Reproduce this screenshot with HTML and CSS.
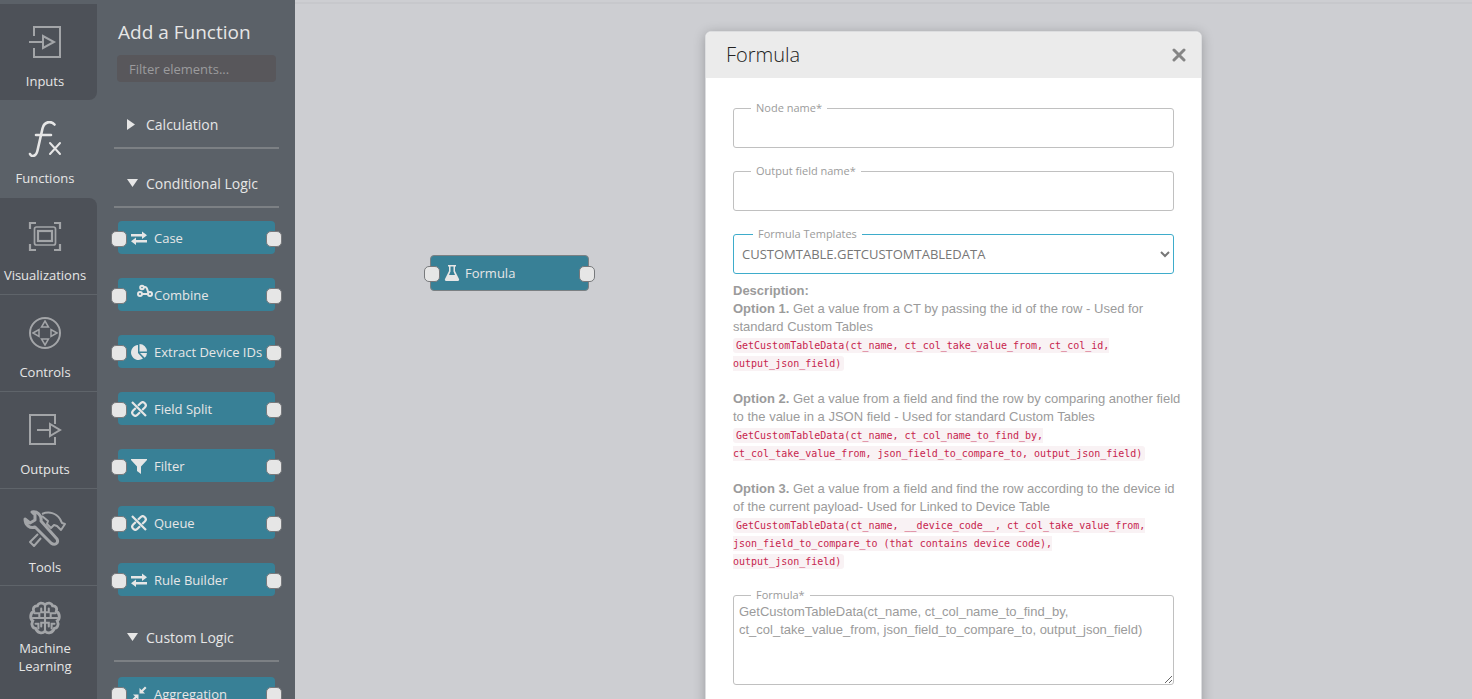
FILE: index.html
```html
<!DOCTYPE html>
<html lang="en">
<head>
<meta charset="utf-8">
<title>Formula</title>
<link rel="stylesheet" href="styles.css">
</head>
<body>
<svg class="sprite" aria-hidden="true">
  <symbol id="swap" viewBox="0 0 16 14"><path fill="currentColor" d="M0 3h11V.5L16 4.200 11 8V5.500H0zM16 9v2.500H5V14L0 10.200 5 6.500V9z"/></symbol>
  <symbol id="unlink" viewBox="0 0 16 16"><g fill="none" stroke="currentColor" stroke-width="2.200"><path transform="rotate(-45 8 8)" d="M6.500 5H2.800a3 3 0 0 0 0 6H6.500M9.500 5h3.700a3 3 0 0 1 0 6H9.500"/><path d="M1 1l14 14"/></g></symbol>
</svg>
<div class="app">
  <nav class="rail">
    <button class="rail-item rail-first"><svg class="rail-icon" viewBox="0 0 34 34"><g fill="none" stroke="currentColor" stroke-width="2"><path d="M6 11V2h26v30H6v-9M1 17h13M15 11v12l11-6z"/></g></svg><span>Inputs</span></button>
    <button class="rail-item rail-active"><svg class="rail-icon" viewBox="0 0 34 36"><g fill="none" stroke="currentColor" stroke-linecap="round"><path stroke-width="2.600" d="M2 33c1.500 3 6 3 7.500-3.500l5-22C16 .5 23-.5 26.500 3.500M8 14h15"/><path stroke-width="2" d="M22 22l10 11M32 22 22 33"/></g></svg><span>Functions</span></button>
    <button class="rail-item rail-next"><svg class="rail-icon" viewBox="0 0 34 34"><g fill="none" stroke="currentColor" stroke-width="2.200"><path d="M2 10V4h6M26 4h6v6M32 25v6h-6M8 31H2v-6"/><rect x="6.500" y="8" width="21" height="18" rx="2" stroke-width="1.700"/><rect x="10" y="12" width="14" height="10"/></g></svg><span>Visualizations</span></button>
    <button class="rail-item"><svg class="rail-icon" viewBox="0 0 34 34"><g fill="none" stroke="currentColor" stroke-width="2"><circle cx="17" cy="17" r="15"/><path stroke-width="1.500" d="m17 5 3.500 6h-7zM17 29l3.500-6h-7zM5 17l6-3.500v7zM29 17l-6-3.500v7z"/></g></svg><span>Controls</span></button>
    <button class="rail-item"><svg class="rail-icon" viewBox="0 0 34 34"><g fill="none" stroke="currentColor" stroke-width="2"><path d="M27 11V2H2v29h25v-7M9 17h13M22 11v12l10-6z"/></g></svg><span>Outputs</span></button>
    <button class="rail-item"><svg class="rail-icon rail-icon-wide" viewBox="0 0 44 38"><g fill="none" stroke="currentColor" stroke-width="2" stroke-linejoin="round"><path d="M19 4c7-3 14-1 18 5l2 4 3 1-4 6-4-4-3-1-3 3-4-4 1-3-6-5M15 24l-8 8 4 4 7-8"/><path stroke-width="3" d="m2 9 5 4 5-3V5L9 2c5-1 10 3 9 9l16 18c2 4-2 7-6 4L12 17c-5 2-10-2-10-8z"/></g></svg><span>Tools</span></button>
    <button class="rail-item rail-last"><svg class="rail-icon" viewBox="0 0 34 36"><g fill="none" stroke="currentColor" stroke-width="2.200" stroke-linecap="round"><path stroke-width="3" d="M17 4c-3-3-7-2-8 1-4 0-5 3-4 6-4 2-4 8-1 10-2 4 0 8 3 8 2 5 7 6 10 3 3 3 8 2 10-3 3 0 5-4 3-8 3-2 3-8-1-10 1-3 0-6-4-6-1-3-5-4-8-1z"/><path d="M17 4v28M13 8v4h4M21 8v4h-4M6 13h5v5H4M28 13h-5v5h7M12 18h10M13 27v-4h8v4M7 24h3v5M27 24h-3v5"/></g></svg><span>Machine<br>Learning</span></button>
  </nav>
  <aside class="panel">
    <h2 class="panel-title">Add a Function</h2>
    <input class="filter" type="text" aria-label="Filter elements" placeholder="Filter elements...">
    <button class="group group-first"><svg class="caret" viewBox="0 0 12 12"><path fill="currentColor" d="M1 1v11l8-5.500z"/></svg>Calculation</button>
    <button class="group"><svg class="caret" viewBox="0 0 12 12"><path fill="currentColor" d="M1 2h11l-5.500 8z"/></svg>Conditional Logic</button>
    <div class="nodes">
      <div class="node"><svg class="node-icon"><use href="#swap"/></svg>Case</div>
      <div class="node node-combine"><svg class="node-icon" viewBox="0 0 16 16"><g fill="none" stroke="currentColor" stroke-width="2"><circle cx="5" cy="3.500" r="1.800"/><circle cx="3" cy="10" r="2"/><circle cx="13" cy="10" r="2"/><path d="M5 10h6M6 3h2c3 0 2 5 4 6"/></g></svg>Combine</div>
      <div class="node"><svg class="node-icon" viewBox="0 0 16 16"><path fill="currentColor" d="M7 1v8l5 5.500A7.500 7.500 0 1 1 7 1zM8.500 0A7.500 7.500 0 0 1 16 7.500H8.500zM9 9h7a7 7 0 0 1-2.300 4.700z"/></svg>Extract Device IDs</div>
      <div class="node"><svg class="node-icon"><use href="#unlink"/></svg>Field Split</div>
      <div class="node"><svg class="node-icon" viewBox="0 0 16 16"><path fill="currentColor" d="M0 1h16v1l-6 6.500V16l-4-3V8.500L0 2z"/></svg>Filter</div>
      <div class="node"><svg class="node-icon"><use href="#unlink"/></svg>Queue</div>
      <div class="node"><svg class="node-icon"><use href="#swap"/></svg>Rule Builder</div>
    </div>
    <button class="group"><svg class="caret" viewBox="0 0 12 12"><path fill="currentColor" d="M1 2h11l-5.500 8z"/></svg>Custom Logic</button>
    <div class="nodes nodes-custom">
      <div class="node"><svg class="node-icon" viewBox="0 0 16 16"><g fill="currentColor"><path d="M8.500 7.500V2l2 2L14 .5 15.500 2 12 5.500l2 2zM7.500 8.500V14l-2-2L2 15.500.5 14 4 10.500l-2-2z"/></g></svg>Aggregation</div>
    </div>
  </aside>
  <main class="canvas">
    <div class="node canvas-node"><svg class="node-icon" viewBox="0 0 16 16"><path fill="currentColor" fill-rule="evenodd" d="M4 0h8v1.500h-1V6l4 8c.5 1-.2 2-1.200 2H2.200C1.200 16 .5 15 1 14l4-8V1.500H4zM6.500 1.500v5L5 10h6L9.500 6.500v-5z"/></svg>Formula</div>
    <section class="dialog" role="dialog" aria-labelledby="dialog-title">
      <header class="dialog-head">
        <h1 class="dialog-title" id="dialog-title">Formula</h1>
        <button class="close" aria-label="Close"><svg class="close-icon" viewBox="0 0 14 14"><path d="m2 2 10 10M12 2 2 12" fill="none" stroke="currentColor" stroke-width="3" stroke-linecap="round"/></svg></button>
      </header>
      <form class="dialog-body">
        <div class="field"><label class="label" for="node-name">Node name*</label><input class="control" id="node-name" type="text"></div>
        <div class="field"><label class="label" for="output-name">Output field name*</label><input class="control" id="output-name" type="text"></div>
        <div class="field"><label class="label label-select" for="template">Formula Templates</label><select class="control control-select" id="template"><option>CUSTOMTABLE.GETCUSTOMTABLEDATA</option></select></div>
        <div class="description">
          <p class="option"><b>Description:</b><br><b>Option 1.</b> Get a value from a CT by passing the id of the row - Used for<br>standard Custom Tables<br><code class="code">GetCustomTableData(ct_name, ct_col_take_value_from, ct_col_id,<br>output_json_field)</code></p>
          <p class="option"><b>Option 2.</b> Get a value from a field and find the row by comparing another field<br>to the value in a JSON field - Used for standard Custom Tables<br><code class="code">GetCustomTableData(ct_name, ct_col_name_to_find_by,<br>ct_col_take_value_from, json_field_to_compare_to, output_json_field)</code></p>
          <p class="option"><b>Option 3.</b> Get a value from a field and find the row according to the device id<br>of the current payload- Used for Linked to Device Table<br><code class="code">GetCustomTableData(ct_name, __device_code__, ct_col_take_value_from,<br>json_field_to_compare_to (that contains device code),<br>output_json_field)</code></p>
        </div>
        <div class="field"><label class="label" for="formula">Formula*</label><textarea class="control control-area" id="formula">GetCustomTableData(ct_name, ct_col_name_to_find_by, ct_col_take_value_from, json_field_to_compare_to, output_json_field)</textarea></div>
      </form>
    </section>
  </main>
</div>
</body>
</html>
```

FILE: styles.css
```css
* { box-sizing: border-box; }
body { margin: 0; font-family: "Open Sans", sans-serif; font-size: 13px; color: #e6e6e6; }
button, input, select, textarea { font: inherit; color: inherit; }
button { background: none; border: 0; padding: 0; cursor: pointer; }
.sprite { position: absolute; width: 0; height: 0; }
.app { display: flex; height: 100vh; overflow: hidden; background: #5b6168; }

.rail { flex: 0 0 97px; padding-top: 4px; display: flex; flex-direction: column; }
.rail-item { flex: none; height: 97px; padding: 21px 7px 0 0; display: flex; flex-direction: column; align-items: center; gap: 13px; background: #4d5158; border-bottom: 1px solid #5f646a; line-height: 18px; }
.rail-icon { width: 34px; height: 34px; flex: none; color: #a3a5a8; }
.rail-icon-wide { width: 44px; height: 38px; margin-bottom: -3px; }
.rail-first { height: 96px; border: 0; border-radius: 0 0 8px 0; }
.rail-active { height: 98px; background: none; border: 0; }
.rail-active .rail-icon { color: #e6e6e6; height: 36px; margin-bottom: -1px; }
.rail-next { border-radius: 0 8px 0 0; }
.rail-last { height: 120px; padding-top: 15px; gap: 4px; border: 0; }

.panel { flex: 0 0 198px; padding: 18px 16px 0 17px; display: flex; flex-direction: column; overflow: hidden; }
.panel-title { margin: 0 4px; font-size: 19px; line-height: 28px; font-weight: 400; }
.filter { flex: none; height: 27px; width: auto; margin: 9px 3px 0; padding: 0 12px; background: #58575b; border: 0; border-radius: 4px; }
.filter::placeholder { color: #9b9b9d; opacity: 1; }
.group { flex: none; height: 59px; padding: 11px 0 0 12px; display: flex; align-items: center; gap: 8px; font-size: 14px; text-align: left; border-bottom: 2px solid #7c8084; }
.group-first { margin-top: 8px; }
.caret { width: 12px; height: 12px; }
.nodes { padding: 13px 4px 7px; display: flex; flex-direction: column; gap: 24px; }
.nodes-custom { padding-top: 15px; }
.node { position: relative; flex: none; height: 33px; padding: 0 13px; display: flex; align-items: center; gap: 7px; background: #388096; border-radius: 4px; line-height: 18px; white-space: nowrap; }
.node-icon { width: 16px; height: 16px; flex: none; }
.node-combine { padding-left: 19px; gap: 1px; }
.node-combine .node-icon { margin-bottom: 6px; }
.node::before, .node::after { content: ""; position: absolute; top: 10px; width: 14px; height: 14px; background: #e6e6e6; border: 1px solid #77797c; border-radius: 5px; }
.node::before { left: -7px; }
.node::after { right: -7px; }

.canvas { position: relative; flex: 1; background: #cdced2; border-top: 2px solid #cdced2; box-shadow: inset 0 2px #c7c8cc; }
.canvas-node { position: absolute; left: 135px; top: 253px; width: 159px; height: 36px; gap: 5px; border: 1px solid #7b8083; }
.dialog { position: absolute; right: 270px; top: 29px; width: 497px; background: #fff; border: 1px solid #dcdddf; border-radius: 6px 6px 0 0; box-shadow: 0 2px 12px rgba(0, 0, 0, .25); color: #9b9b9b; }
.dialog-head { display: flex; justify-content: space-between; align-items: center; height: 46px; padding: 0 15px 0 20px; background: #ebebeb; border-radius: 5px 5px 0 0; }
.dialog-title { margin: 0; font-size: 20px; line-height: 28px; font-weight: 300; color: #222; }
.close { display: flex; color: #858585; }
.close-icon { width: 14px; height: 14px; }
.dialog-body { padding: 30px 27px 40px; }
.field { position: relative; margin-bottom: 23px; }
.label { position: absolute; left: 18px; top: -8px; padding: 0 5px; background: #fff; font-size: 11px; line-height: 16px; }
.label-select { left: 20px; }
.control { display: block; width: 100%; height: 40px; padding: 0 5px; border: 1px solid #c0c0c0; border-radius: 3px; background: #fff; color: #777; outline: 0; }
.control-select { padding: 0 4px; border-color: #3eaccb; }
.control-area { height: 90px; padding: 7px 5px; font-family: "Liberation Sans", Arial, sans-serif; line-height: 18px; color: #9b9b9b; resize: vertical; }
.description { margin: -15px 0 25px; font-family: "Liberation Sans", Arial, sans-serif; line-height: 18px; white-space: nowrap; }
.option { margin: 0; }
.option + .option { margin-top: 18px; }
.code { padding: 2px 3px; background: #f9f2f4; border-radius: 3px; font-family: "DejaVu Sans Mono", monospace; font-size: 10px; line-height: 14px; color: #c7254e; }
```
